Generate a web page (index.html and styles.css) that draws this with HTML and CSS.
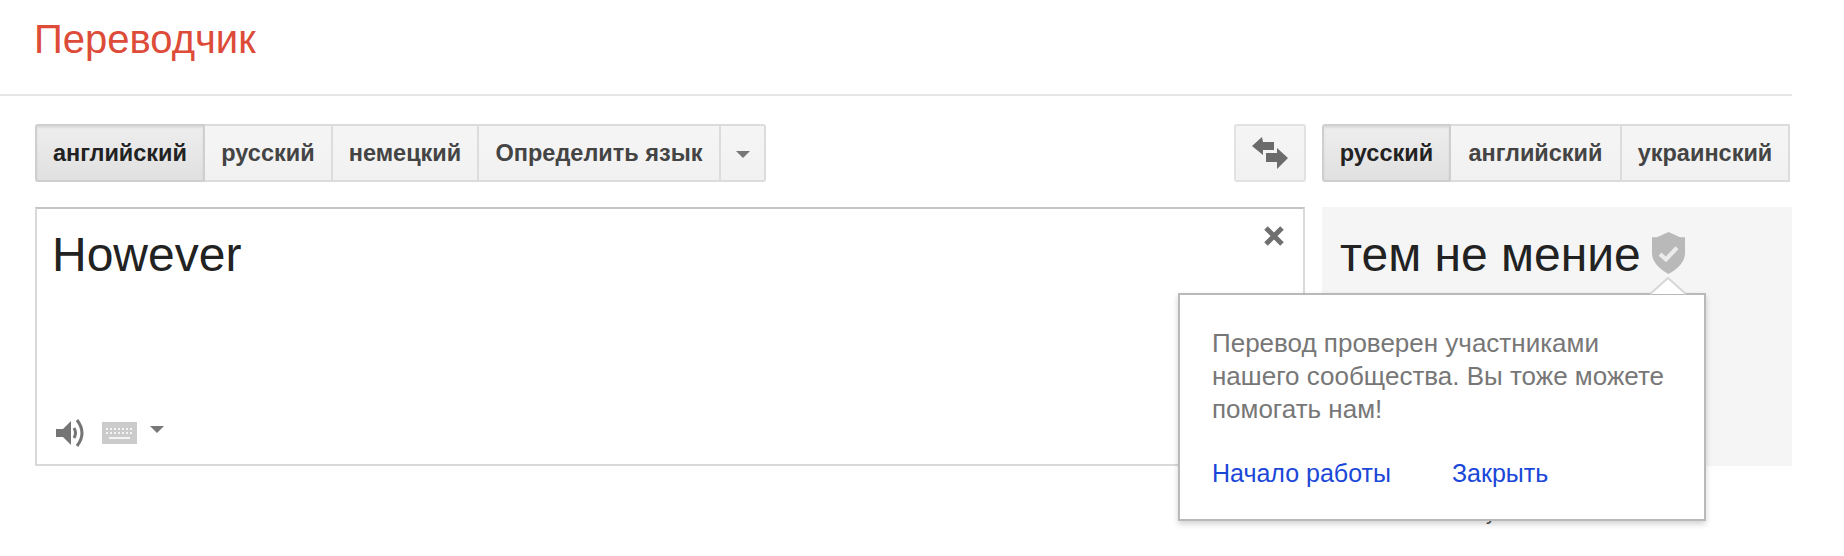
FILE: index.html
```html
<!DOCTYPE html>
<html lang="ru">
<head>
  <meta charset="UTF-8">
  <meta name="viewport" content="width=device-width, initial-scale=1.0">
  <title>Переводчик</title>
  <link rel="stylesheet" href="styles.css">
</head>
<body>
  <div class="page">
    <!-- Header -->
    <header class="header">
      <h1>Переводчик</h1>
    </header>

    <!-- Language bars -->
    <div class="toolbar">
      <div class="lang-group source-langs">
        <button class="lang-btn active lang-en">английский</button>
        <button class="lang-btn lang-ru">русский</button>
        <button class="lang-btn lang-de">немецкий</button>
        <button class="lang-btn lang-detect">Определить язык</button>
        <button class="lang-btn lang-more"><span class="caret"></span></button>
      </div>
      <button class="swap-btn">
        <svg width="38" height="34" viewBox="0 0 38 34"><path fill="#6b6b6b" d="M1 10 L11 1 L12 6 L23 6 L23 14 L12 14 L12 19 Z M15 17 L26 17 L26 12 L37 22 L26 33 L26 26 L15 26 Z"/></svg>
      </button>
      <div class="lang-group target-langs">
        <button class="lang-btn active t-ru">русский</button>
        <button class="lang-btn t-en">английский</button>
        <button class="lang-btn t-uk">украинский</button>
      </div>
    </div>

    <!-- Translate panels -->
    <div class="panels">
      <div class="source-box">
        <div class="source-text">However</div>
        <svg class="clear-icon" width="20" height="20" viewBox="0 0 20 20"><path stroke="#707070" stroke-width="5" d="M2 2 L18 18 M18 2 L2 18"/></svg>
        <div class="source-tools">
          <svg width="30" height="30" viewBox="0 0 30 30">
            <path fill="#757575" d="M0 11 L7 11 L15 3 L15 27 L7 19 L0 19 Z"/>
            <path fill="none" stroke="#757575" stroke-width="3" d="M18 10 Q21 15 18 20 M21 2 Q31 15 21 28"/>
          </svg>
          <svg class="keyboard-icon" width="35" height="22" viewBox="0 0 35 22">
            <rect width="35" height="22" fill="#cbcbcb"/>
            <path stroke="#f4f4f4" stroke-width="2" stroke-dasharray="2 2" d="M4 7 H31 M4 11 H31"/>
            <path stroke="#f4f4f4" stroke-width="2" d="M7 16 H28"/>
          </svg>
          <span class="caret small"></span>
        </div>
      </div>
      <div class="result-box">
        <span class="result-text">тем не мение</span>
        <svg class="shield" width="33" height="42" viewBox="0 0 33 40" preserveAspectRatio="none">
          <path fill="#b9b9b9" d="M16.5 0 L28 5 L33 5 L33 21 Q32 32 16.5 40 Q1 32 0 21 L0 5 L5 5 Z"/>
          <path fill="none" stroke="#ececec" stroke-width="4" d="M8 21 L14 26 L25 15"/>
        </svg>
      </div>
    </div>

    <span class="hidden-tail">у</span>

    <!-- Community popup -->
    <div class="popup">
      <svg class="popup-arrow" width="36" height="18" viewBox="0 0 36 18"><path fill="#fff" stroke="#d6d6d6" stroke-width="2" d="M0 17 L18 1 L36 17"/></svg>
      <p>Перевод проверен участниками нашего сообщества. Вы тоже можете помогать нам!</p>
      <div class="popup-links">
        <a href="#">Начало работы</a>
        <a href="#">Закрыть</a>
      </div>
    </div>
  </div>
</body>
</html>
```

FILE: styles.css
```css
/* General */
body {
  margin: 0;
  background-color: #fff;
  font-family: "Liberation Sans", Arial, sans-serif;
  color: #222;
  overflow: hidden;
}

.page {
  position: relative;
  width: 1792px;
  height: 556px;
  overflow: hidden;
}

/* Header */
.header {
  height: 94px;
  padding-left: 34px;
  border-bottom: 2px solid #e5e5e5;
}

.header h1 {
  margin: 0;
  padding-top: 17px;
  font-size: 40px;
  line-height: 44px;
  font-weight: normal;
  color: #dd4b39;
}

/* Language bars */
.toolbar {
  display: flex;
  padding: 28px 0 0 35px;
  height: 58px;
}

.lang-group {
  display: flex;
  height: 58px;
}

.source-langs {
  width: 731px;
}

.target-langs {
  width: 470px;
  margin-left: 16px;
}

.lang-btn {
  padding: 0;
  height: 58px;
  border: 2px solid #dcdcdc;
  border-left-width: 0;
  background: linear-gradient(#f5f5f5, #f1f1f1);
  font-family: inherit;
  font-size: 23.5px;
  font-weight: bold;
  color: #444;
}

.lang-btn:first-child {
  border-left-width: 2px;
  border-radius: 3px 0 0 3px;
}

.lang-btn.active {
  background: linear-gradient(#eeeeee, #e0e0e0);
  border-color: #cfcfcf;
  box-shadow: inset 0 2px 2px rgba(0, 0, 0, 0.08);
  color: #222;
}

.lang-en { width: 170px; }
.lang-ru { width: 128px; }
.lang-de { width: 146px; }
.lang-detect { width: 242px; }
.lang-more { width: 45px; border-radius: 0 3px 3px 0; }
.t-ru { width: 129px; }
.t-en { width: 171px; }
.t-uk { width: 168px; }

.caret {
  display: inline-block;
  border-left: 7px solid transparent;
  border-right: 7px solid transparent;
  border-top: 7px solid #777;
  vertical-align: middle;
}

.swap-btn {
  width: 72px;
  height: 58px;
  margin-left: 468px;
  padding: 0;
  border: 2px solid #e2e2e2;
  border-radius: 3px;
  background: linear-gradient(#f5f5f5, #f1f1f1);
  display: flex;
  align-items: center;
  justify-content: center;
}

/* Panels */
.panels {
  display: flex;
  margin: 25px 0 0 35px;
  height: 259px;
}

.source-box {
  position: relative;
  box-sizing: border-box;
  width: 1270px;
  padding: 18px 15px 0;
  border: 2px solid #d9d9d9;
  border-top-color: #c4c4c4;
}

.source-text {
  font-size: 48px;
  line-height: 56px;
  color: #222;
}

.clear-icon {
  position: absolute;
  top: 17px;
  right: 19px;
}

.source-tools {
  position: absolute;
  left: 19px;
  bottom: 16px;
  display: flex;
  align-items: center;
}

.keyboard-icon {
  margin-left: 16px;
}

.caret.small {
  margin: 0 0 8px 13px;
}

.result-box {
  box-sizing: border-box;
  width: 435px;
  margin-left: 17px;
  flex-grow: 1;
  padding: 20px 18px 0;
  background-color: #f5f5f5;
  display: flex;
  align-items: flex-start;
}

.result-text {
  font-size: 48px;
  line-height: 56px;
  color: #222;
}

.shield {
  margin: 5px 0 0 11px;
}

.hidden-tail {
  position: absolute;
  left: 1486px;
  top: 502px;
  font-size: 20px;
  color: #444;
}

/* Popup */
.popup {
  position: absolute;
  left: 1178px;
  top: 293px;
  box-sizing: border-box;
  width: 528px;
  height: 228px;
  padding: 32px 30px 0 32px;
  background-color: #fff;
  border: 2px solid #b9b9b9;
  box-shadow: 0 3px 6px rgba(0, 0, 0, 0.18);
  font-size: 25px;
  color: #777;
}

.popup p {
  margin: 0;
  font-size: 26px;
  line-height: 33px;
}

.popup-arrow {
  position: absolute;
  left: 470px;
  top: -18px;
}

.popup-links {
  display: flex;
  gap: 61px;
  margin-top: 31px;
  line-height: 33px;
}

.popup-links a {
  color: #1a47d8;
  text-decoration: none;
}
```
